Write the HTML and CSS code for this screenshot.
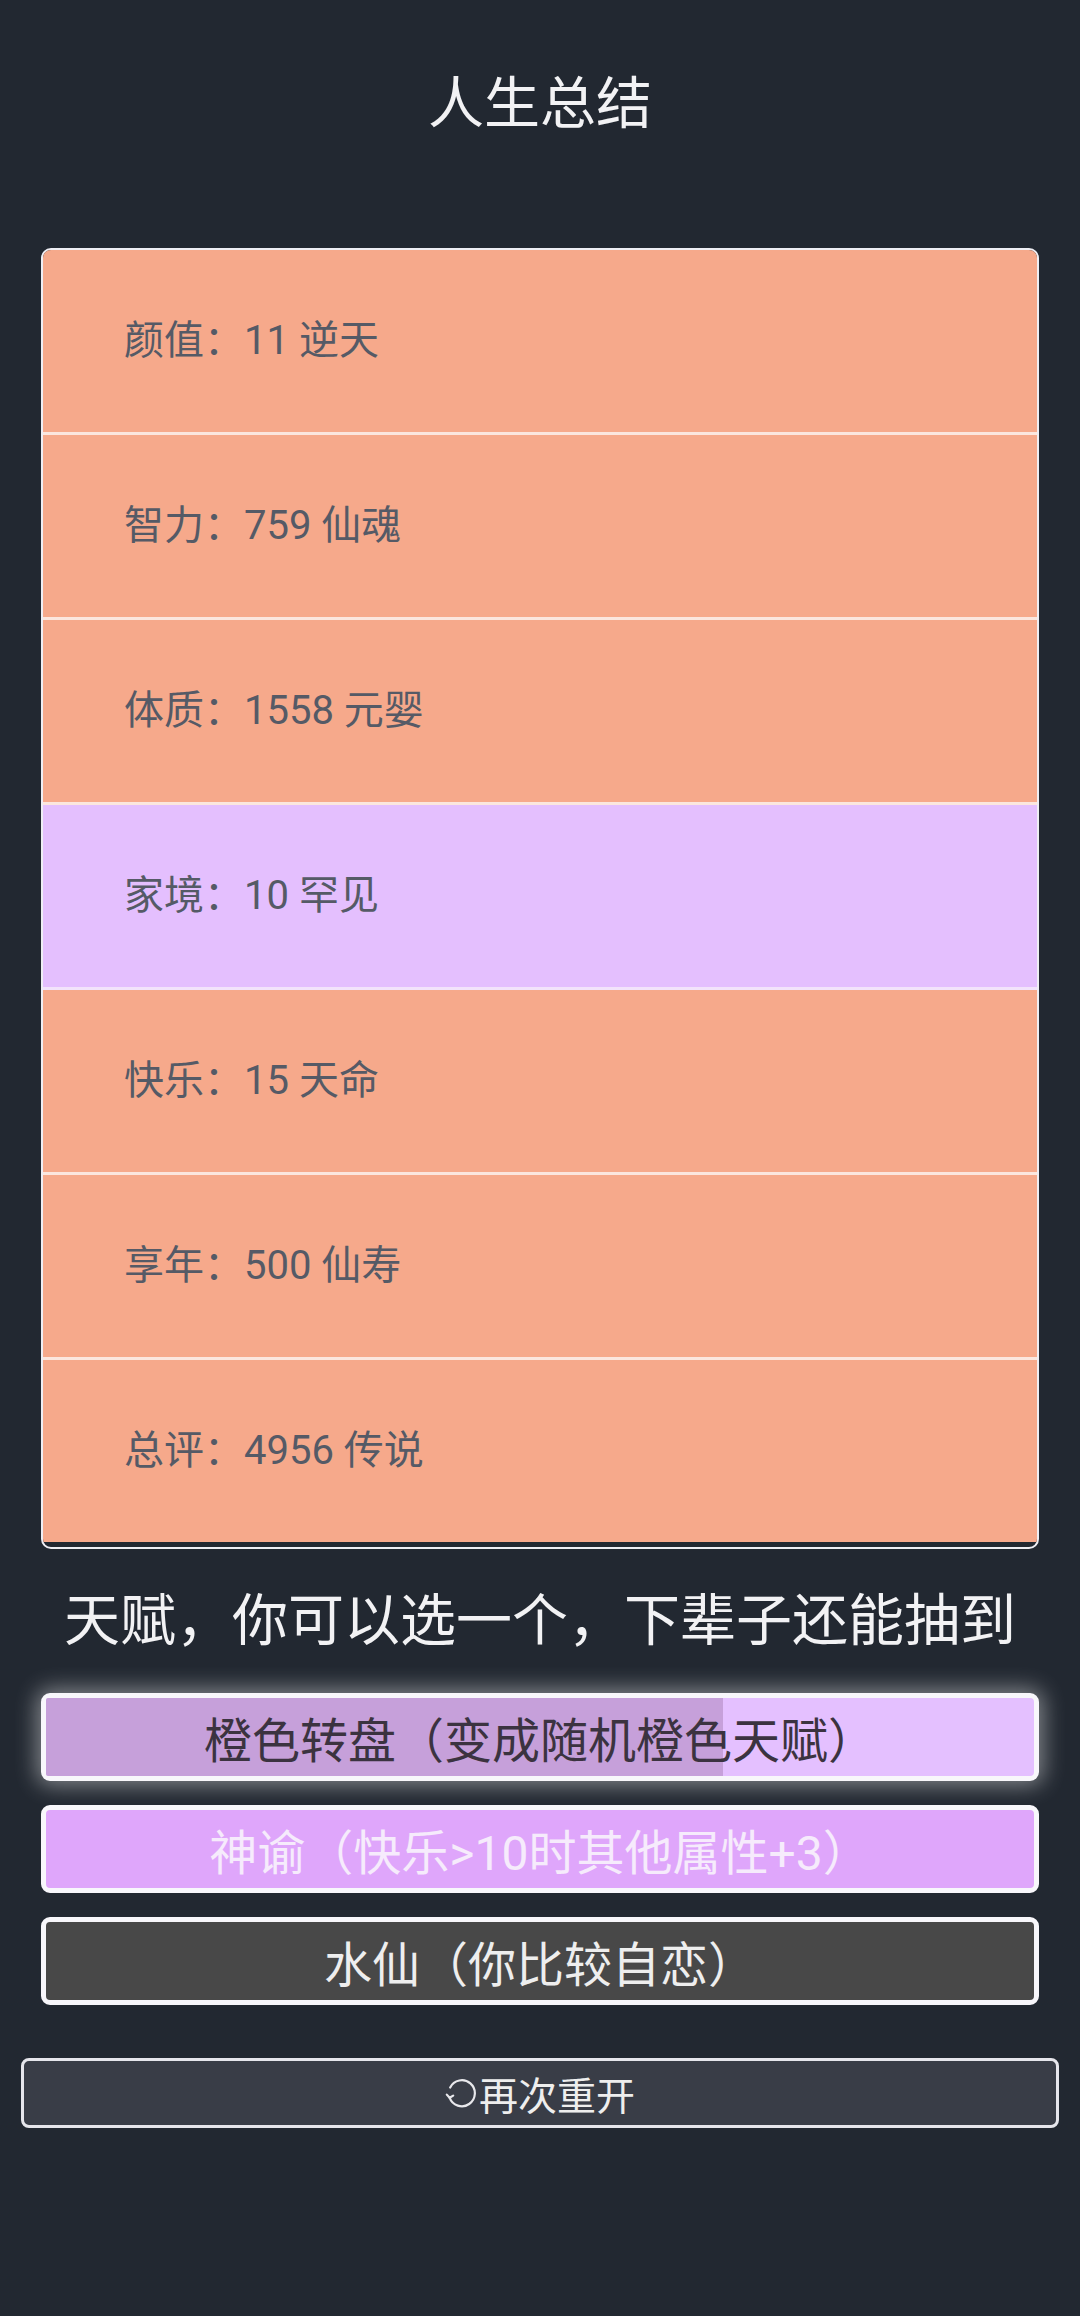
FILE: index.html
```html
<!DOCTYPE html>
<html lang="zh-CN">
<head>
    <meta charset="UTF-8">
    <meta name="viewport" content="width=device-width, initial-scale=1.0">
    <title>人生总结</title>
    <link rel="stylesheet" href="styles.css">
</head>
<body>
    <div class="summary">
        <h1 class="title">人生总结</h1>
        <ul class="judge">
            <li class="grade3">颜值：11 逆天</li>
            <li class="grade3">智力：759 仙魂</li>
            <li class="grade3">体质：1558 元婴</li>
            <li class="grade2">家境：10 罕见</li>
            <li class="grade3">快乐：15 天命</li>
            <li class="grade3">享年：500 仙寿</li>
            <li class="grade3">总评：4956 传说</li>
        </ul>
        <h2 class="subtitle">天赋，你可以选一个，下辈子还能抽到</h2>
        <ul class="talents">
            <li class="talent grade2b selected">
                <span class="progress" style="width: 68.5%"></span>
                <span class="label">橙色转盘（变成随机橙色天赋）</span>
            </li>
            <li class="talent grade2c">
                <span class="label">神谕（快乐&gt;10时其他属性+3）</span>
            </li>
            <li class="talent grade0">
                <span class="label">水仙（你比较自恋）</span>
            </li>
        </ul>
        <button class="restart">
            <svg class="icon" width="32" height="30" viewBox="0 0 32 30">
                <path d="M5.2 9.5 A13 13 0 1 1 4.6 19.6" fill="none" stroke="#e8e8ec" stroke-width="2.2" stroke-linecap="round"/>
                <path d="M1.8 16.6 L4.6 19.8 L8.2 17.6" fill="none" stroke="#e8e8ec" stroke-width="2.2" stroke-linecap="round" stroke-linejoin="round"/>
            </svg>再次重开</button>
    </div>
</body>
</html>
```

FILE: styles.css
```css
html {
  box-sizing: border-box;
}

*,
*:before,
*:after {
  box-sizing: inherit;
}

body {
  margin: 0;
  min-height: 100vh;
  background: #222831;
  color: #eeeeee;
  font-family: Roboto, "Noto Sans CJK SC", sans-serif;
}

ul {
  list-style: none;
  margin: 0;
  padding: 0;
}

.summary {
  padding: 70px 0 0;
}

.title {
  margin: 0 0 110px;
  font-size: 56px;
  font-weight: 400;
  line-height: 68px;
  text-align: center;
  color: #f2f2f4;
}

.judge {
  margin: 0 41px;
  padding-bottom: 5px;
  border: 2px solid #eeeef4;
  border-radius: 10px;
  overflow: hidden;
}

.judge li {
  display: flex;
  align-items: center;
  height: 185px;
  padding: 0 0 8px 81px;
  border-bottom: 3px solid #fbe6de;
  font-size: 40px;
  color: #555a66;
}
.judge li:last-child {
  border-bottom: none;
  height: 182px;
}

.judge .grade3 {
  background: #f6a98b;
}
.judge .grade2 {
  background: #e4bffe;
  border-bottom-color: #f2e3fb;
}

.subtitle {
  margin: 38px 0 38px;
  font-size: 56px;
  font-weight: 400;
  line-height: 68px;
  text-align: center;
  color: #f2f2f4;
}

.talents {
  display: flex;
  flex-direction: column;
  gap: 24px;
  margin: 0 41px;
}

.talent {
  position: relative;
  display: flex;
  align-items: center;
  justify-content: center;
  height: 88px;
  border: 5px solid #f8f7fb;
  border-radius: 9px;
  overflow: hidden;
  font-size: 48px;
}

.talent .label {
  position: relative;
}

.talent .progress {
  position: absolute;
  top: 0;
  left: 0;
  bottom: 0;
  background: #c6a0da;
}

.talent.selected {
  box-shadow: 0 0 22px 4px rgba(255, 255, 255, 0.45);
  overflow: visible;
}
.talent.selected .progress {
  border-radius: 2px 0 0 2px;
}

.grade2b {
  background: #e4c0ff;
  color: #3b3340;
}

.grade2c {
  background: #dfa6fb;
  color: #f6ebfc;
}

.grade0 {
  background: #484848;
  color: #eeeeee;
}

.restart {
  display: flex;
  align-items: center;
  justify-content: center;
  width: 1038px;
  height: 70px;
  margin: 53px 21px 0;
  padding: 0;
  border: 3px solid #e6e6ec;
  border-radius: 8px;
  background: #393d47;
  color: #eeeeee;
  font-family: Roboto, "Noto Sans CJK SC", sans-serif;
  font-size: 39px;
}

.restart .icon {
  margin-right: 2px;
}
```
